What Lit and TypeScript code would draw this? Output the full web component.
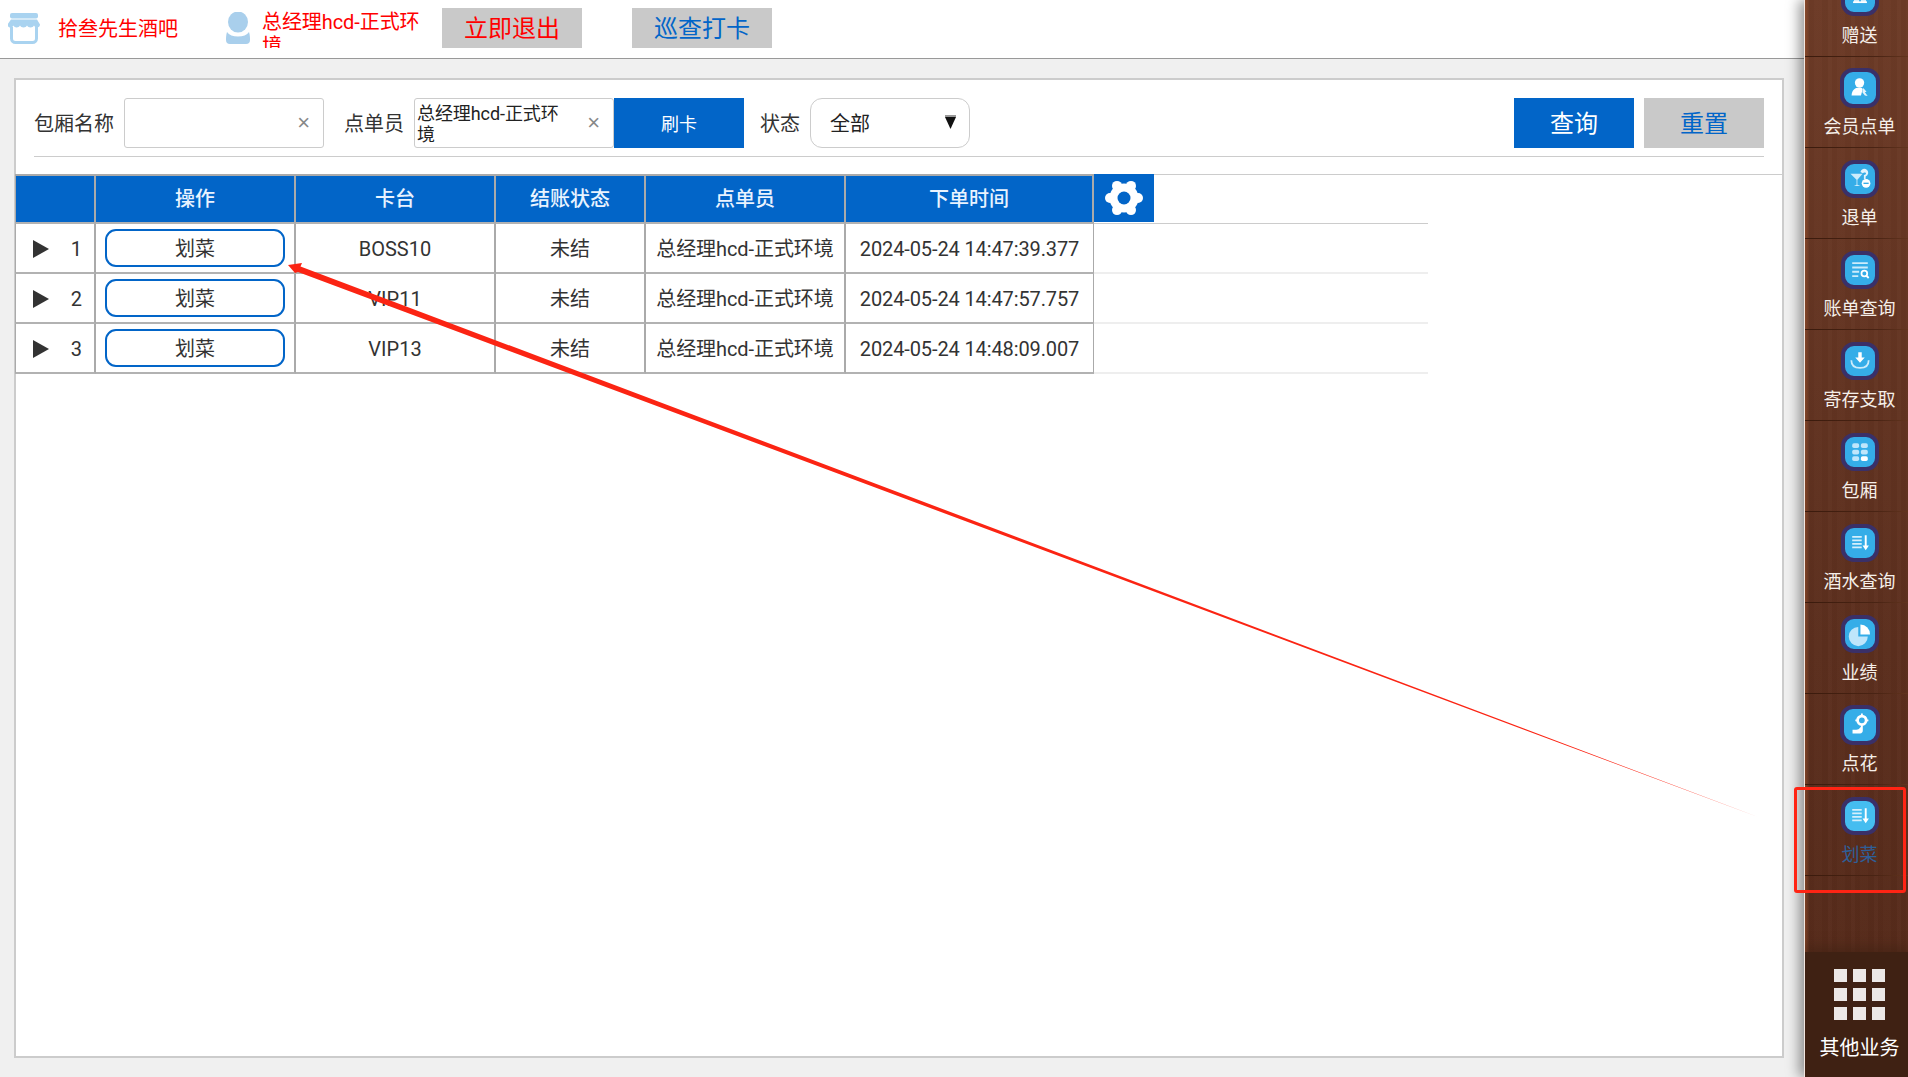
import { css, html, svg, LitElement } from "lit";
import { customElement } from "lit/decorators.js";

const columns = [81, 200, 200, 150, 200, 248];
const rows = [
  { no: 1, table: "BOSS10", status: "未结", waiter: "总经理hcd-正式环境", time: "2024-05-24 14:47:39.377" },
  { no: 2, table: "VIP11", status: "未结", waiter: "总经理hcd-正式环境", time: "2024-05-24 14:47:57.757" },
  { no: 3, table: "VIP13", status: "未结", waiter: "总经理hcd-正式环境", time: "2024-05-24 14:48:09.007" },
];

const listArrow = svg`
  <path d="M6 7h11v2H6zM6 11h11v2H6zM6 15h11v2H6zM6 19h11v2H6z" fill="#d5effc"/>
  <path d="M20.500 6h2.200v12h2.600l-3.700 5.500-3.700-5.500h2.600z" fill="#fff"/>`;

const menu = [
  {
    label: "赠送",
    icon: svg`<path d="M7 8h16v3H7zM8 12h14v10H8z" fill="#d5effc"/><path d="M14 8h2v14h-2z" fill="#35ade8"/><path d="M7 20h16v2H7z" fill="#fff"/>`,
  },
  {
    label: "会员点单",
    big: true,
    icon: svg`<circle cx="14.500" cy="9.500" r="5" fill="#fff"/><path d="M6 23c0-5 3.500-8.500 8-8.500 2 0 3 .5 4 1.500l-2 7z" fill="#fff"/><path d="M18.500 15l3.500 4-1.800.5 3 4-3-.5-2.700-3.500z" fill="#e3f4fd"/>`,
  },
  {
    label: "退单",
    icon: svg`<path d="M4 9h14l-6 7v5.500l3.500 1.500H8l3-1.500V16z" fill="#cdecfb"/><path d="M15.500 7a4.500 4.500 0 1 1 6 5V15h-2v-4.500c2-.3 2.800-1.500 2.200-2.500-.7-1-2.900-.6-3.300.5z" fill="#e3f4fd"/><circle cx="22" cy="20" r="5" fill="#fff"/><path d="M19 19.200h6v1.600h-6z" fill="#35ade8"/>`,
  },
  {
    label: "账单查询",
    icon: svg`<path d="M6 6h18v2.200H6zM6 11h18v2.200H6zM6 16h8v2.200H6zM6 21h7v2.200H6z" fill="#cdecfb"/><circle cx="20" cy="19" r="3.300" fill="none" stroke="#fff" stroke-width="2"/><path d="M22.300 21.500l2.700 2.700" stroke="#fff" stroke-width="2.200"/>`,
  },
  {
    label: "寄存支取",
    icon: svg`<path d="M13 5h4v6h3.500L15 17l-5.500-6H13z" fill="#fff"/><path d="M5 14c0 6 3.500 9 10 9s10-3 10-9" fill="none" stroke="#cdecfb" stroke-width="2"/>`,
  },
  {
    label: "包厢",
    icon: svg`<g fill="#bfe6fb"><rect x="6" y="5" width="8" height="5.500" rx="2"/><rect x="16" y="5" width="8" height="5.500" rx="2"/><rect x="6" y="12.500" width="8" height="5.500" rx="2"/><rect x="16" y="12.500" width="8" height="5.500" rx="2"/><rect x="6" y="20" width="8" height="5.500" rx="2"/></g><rect x="16" y="20" width="8" height="5.500" rx="2" fill="#fff"/>`,
  },
  { label: "酒水查询", icon: listArrow },
  {
    label: "业绩",
    icon: svg`<path d="M13 7v11h11A11 11 0 1 1 13 7z" fill="#bfe6fb"/><path d="M15.500 4A11 11 0 0 1 26.500 15.500h-11z" fill="#fff"/>`,
  },
  {
    label: "点花",
    big: true,
    icon: svg`<circle cx="17" cy="10" r="4.600" fill="none" stroke="#fff" stroke-width="3"/><path d="M17 2.800v2M17 15.200v2M10 10h2M22 10h2" stroke="#fff" stroke-width="2"/><path d="M16 17h2v4c0 2-1 3-3 3H7v-4h4c2 0 3-.5 3.500-1.500z" fill="#fff"/>`,
  },
  { label: "划菜", icon: listArrow, active: true },
];

@customElement("app-root")
export class AppRoot extends LitElement {
  static styles = css`
    :host {
      display: flex;
      position: relative;
      width: 1908px;
      height: 1077px;
      overflow: hidden;
      font-family: "Roboto", "Noto Sans CJK SC", sans-serif;
      font-size: 20px;
      color: #333;
      background: #f0f0f0;
    }

    .main {
      width: 1804px;
      display: flex;
      flex-direction: column;
      flex: none;
    }

    .header {
      height: 58px;
      box-sizing: content-box;
      border-bottom: 1px solid #999;
      background: #fff;
      display: flex;
      align-items: flex-start;
      padding-left: 8px;
      color: #f00;
      flex: none;
    }
    .shop-icon {
      margin-top: 13px;
      width: 32px;
      height: 31px;
    }
    .shop-name {
      margin-left: 18px;
      margin-top: 15px;
      width: 119px;
      line-height: 28px;
      white-space: nowrap;
    }
    .user-icon {
      margin-left: 49px;
      margin-top: 12px;
      width: 24px;
      height: 32px;
    }
    .user-name {
      margin-left: 12px;
      margin-top: 10px;
      width: 166px;
      height: 38px;
      line-height: 24px;
      overflow: hidden;
      letter-spacing: -0.08px;
    }
    .head-btn {
      margin-top: 8px;
      width: 140px;
      height: 40px;
      box-sizing: border-box;
      padding-bottom: 4px;
      background: #c9c9c9;
      font-size: 24px;
      display: flex;
      align-items: center;
      justify-content: center;
    }
    .quit {
      margin-left: 14px;
    }
    .patrol {
      margin-left: 50px;
      color: #0265c8;
    }

    .panel {
      margin: 19px 20px 19px 14px;
      flex: 1;
      border: 2px solid #ccc;
      background: #fff;
    }
    .filters {
      margin: 18px 18px 0;
      height: 59px;
      box-sizing: border-box;
      border-bottom: 1px solid #ccc;
      display: flex;
      align-items: flex-start;
      color: #333;
    }
    .label {
      height: 50px;
      line-height: 52px;
    }
    .field {
      width: 200px;
      height: 50px;
      box-sizing: border-box;
      border: 1px solid #ccc;
      border-radius: 3px;
      display: flex;
      align-items: center;
      justify-content: flex-end;
      padding-right: 13px;
      margin-left: 10px;
      color: #888;
    }
    .field-name {
      margin-right: 20px;
    }
    .field-text {
      flex: 1;
      font-size: 18px;
      line-height: 21px;
      color: #222;
      padding: 2px 24px 0 2px;
      letter-spacing: -0.08px;
    }
    .clear {
      font-size: 22px;
      font-family: "Liberation Sans", sans-serif;
      line-height: 1;
    }
    .swipe {
      width: 130px;
      height: 50px;
      background: #0265c8;
      color: #fff;
      font-size: 18px;
      display: flex;
      align-items: center;
      justify-content: center;
      margin-right: 16px;
    }
    .select {
      width: 160px;
      height: 50px;
      box-sizing: border-box;
      border: 1px solid #ccc;
      border-radius: 12px;
      margin-left: 10px;
      padding: 0 13px 2px 19px;
      display: flex;
      align-items: center;
      justify-content: space-between;
      color: #222;
    }
    .spacer {
      flex: 1;
    }
    .btn {
      width: 120px;
      height: 50px;
      box-sizing: border-box;
      padding-bottom: 4px;
      font-size: 24px;
      display: flex;
      align-items: center;
      justify-content: center;
    }
    .query {
      background: #0265c8;
      color: #fff;
      margin-right: 10px;
    }
    .reset {
      background: #c9c9c9;
      color: #0265c8;
    }

    .grid {
      margin-top: 17px;
      border-top: 1px solid #ccc;
    }
    .row {
      display: flex;
      width: 1413px;
      margin-left: -1px;
      height: 50px;
      box-sizing: border-box;
      border-bottom: 2px solid #eee;
    }
    .head {
      margin-top: -1px;
      border-bottom: 1px solid #ccc;
    }
    .cell {
      height: 50px;
      box-sizing: border-box;
      flex: none;
      padding-bottom: 2px;
      border-right: 2px solid #aaa;
      border-bottom: 2px solid #b2b2b2;
      display: flex;
      align-items: center;
      justify-content: center;
      white-space: nowrap;
    }
    .cell:first-child {
      border-left: 1px solid #aaa;
    }
    .cell:last-child {
      border-right-width: 1px;
    }
    .head .cell {
      background: #0265c8;
      border-top: 2px solid #aaa;
      color: #e9f3ff;
      font-weight: 500;
      padding-bottom: 4px;
    }
    .latin {
      padding: 1px 0 0;
    }
    .waiter {
      letter-spacing: -0.08px;
    }
    .time {
      padding: 1px 0 0;
      letter-spacing: -0.12px;
    }
    .no-cell {
      justify-content: space-between;
      padding: 1px 12px 0 17px;
    }
    .tri {
      width: 16px;
      height: 18px;
    }
    .pick-cell {
      padding-bottom: 0;
    }
    .pick {
      width: 180px;
      height: 38px;
      box-sizing: border-box;
      border: 2px solid #0265c8;
      border-radius: 11px;
      padding-bottom: 2px;
      display: flex;
      align-items: center;
      justify-content: center;
    }
    .head .gear {
      width: 60px;
      height: 48px;
      flex: none;
      background: #0265c8;
      display: flex;
      align-items: center;
      justify-content: center;
    }
    .gear svg {
      width: 40px;
      height: 36px;
    }

    .side {
      width: 104px;
      flex: none;
      display: flex;
      flex-direction: column;
      overflow: hidden;
      position: relative;
      box-sizing: border-box;
      border-left: 1px solid #f2e6e0;
      box-shadow: -5px 0 12px rgba(0, 0, 0, 0.4);
      background:
        repeating-linear-gradient(90deg, rgba(255, 255, 255, 0.015) 0 4px, rgba(0, 0, 0, 0.02) 4px 9px, rgba(255, 255, 255, 0.008) 9px 17px, rgba(0, 0, 0, 0.025) 17px 23px),
        linear-gradient(90deg, rgba(160, 80, 40, 0.5) 0, rgba(160, 80, 40, 0) 4px),
        linear-gradient(180deg, #6d3b27 0, #5c2f1e 60%, #552a1a 100%);
    }
    .items {
      margin-top: -34px;
      flex: 1;
    }
    .item {
      height: 91px;
      box-sizing: border-box;
      padding: 12px 0 0 6px;
      border-bottom: 1px solid;
      border-image: linear-gradient(90deg, #3a1a0c, #4a2414 70%, #63351f) 1;
      display: flex;
      flex-direction: column;
      align-items: center;
      color: #f5efe9;
      font-size: 18px;
    }
    .item.big {
      padding-top: 11px;
    }
    .item.big .tile {
      width: 40px;
      height: 40px;
      margin-bottom: 4px;
    }
    .tile {
      width: 38px;
      height: 38px;
      margin-bottom: 5px;
      box-sizing: border-box;
      border: 4px solid #3a3068;
      border-radius: 13px;
      background: #35ade8;
      flex: none;
    }
    .tile svg {
      display: block;
      box-sizing: border-box;
      padding: 2px;
      width: 100%;
      height: 100%;
    }
    .item.active {
      color: #2f5f98;
    }
    .item.active .tile {
      background: #45bdf0;
    }
    .more {
      height: 125px;
      flex: none;
      box-sizing: border-box;
      background: #3f2113;
      box-shadow: 0 -6px 10px rgba(63, 33, 19, 0.55);
      padding: 17px 0 0 6px;
      display: flex;
      flex-direction: column;
      align-items: center;
      color: #fff;
      position: relative;
    }
    .dots {
      display: grid;
      grid-template-columns: repeat(3, 13px);
      grid-auto-rows: 13px;
      gap: 6px;
      margin-bottom: 12px;
    }
    .dots span {
      background: #ece8e6;
    }

    .mark {
      position: absolute;
      left: 0;
      top: 0;
      width: 1908px;
      height: 1077px;
      pointer-events: none;
    }
    .frame {
      position: absolute;
      left: 1794px;
      top: 787px;
      width: 112px;
      height: 106px;
      box-sizing: border-box;
      border: 3px solid #ff2414;
      border-radius: 3px;
      pointer-events: none;
    }
  `;

  private renderHeader() {
    return html`
      <div class="header">
        <svg class="shop-icon" viewBox="0 0 32 31">
          <rect x="2" y="0" width="28" height="5.500" rx="2" fill="#a9d3f0"/>
          <path d="M3 6.500h26l3 5c0 2-1.500 3-3 3-1.200 0-2.500-.8-3-2-.5 1.200-2 2-3.500 2s-3-.8-3.500-2c-.5 1.200-2 2-3.500 2s-3-.8-3.500-2c-.5 1.200-2 2-3.500 2-1.200 0-2.500-.8-3-2-.5 1.200-1.800 2-3 2-1.500 0-3-1-3-3z" fill="#a9d3f0"/>
          <path d="M3.500 14v11.500a4 4 0 0 0 4 4h17a4 4 0 0 0 4-4V14" fill="none" stroke="#a9d3f0" stroke-width="3"/>
        </svg>
        <div class="shop-name">拾叁先生酒吧</div>
        <svg class="user-icon" viewBox="0 0 24 32">
          <ellipse cx="12" cy="10" rx="10" ry="10.500" fill="#a9cfec"/>
          <path d="M1 20c2 3 6 4.500 11 4.500S21 23 23 20c1 3 1 6 1 8a4 4 0 0 1-4 4H4a4 4 0 0 1-4-4c0-2 0-5 1-8z" fill="#a9cfec"/>
        </svg>
        <div class="user-name">总经理hcd-正式环境</div>
        <div class="head-btn quit">立即退出</div>
        <div class="head-btn patrol">巡查打卡</div>
      </div>
    `;
  }

  private renderFilters() {
    return html`
      <div class="filters">
        <div class="label">包厢名称</div>
        <div class="field field-name"><span class="clear">×</span></div>
        <div class="label">点单员</div>
        <div class="field">
          <div class="field-text">总经理hcd-正式环境</div>
          <span class="clear">×</span>
        </div>
        <div class="swipe">刷卡</div>
        <div class="label">状态</div>
        <div class="select">
          <span>全部</span>
          <svg width="11" height="14" viewBox="0 0 11 14">
            <path d="M0 0h11v2H0z" fill="#999"/>
            <path d="M0 2h11L5.500 14z" fill="#111"/>
          </svg>
        </div>
        <div class="spacer"></div>
        <div class="btn query">查询</div>
        <div class="btn reset">重置</div>
      </div>
    `;
  }

  private renderGrid() {
    const titles = ["", "操作", "卡台", "结账状态", "点单员", "下单时间"];
    const w = (i: number) => `width:${columns[i]}px`;
    return html`
      <div class="grid">
        <div class="row head">
          ${titles.map((t, i) => html`<div class="cell" style=${w(i)}>${t}</div>`)}
          <div class="gear">
            <svg viewBox="0 0 40 36">
              <g fill="#fff">
                <circle cx="20" cy="18" r="14.500"/>
                ${[0, 60, 120, 180, 240, 300].map((a) => {
                  const r = (a * Math.PI) / 180;
                  return svg`<circle cx=${20 + 14 * Math.cos(r)} cy=${18 + 14 * Math.sin(r)} r="5"/>`;
                })}
              </g>
              <circle cx="20" cy="18" r="6.500" fill="#0265c8"/>
            </svg>
          </div>
        </div>
        ${rows.map(
          (r) => html`
            <div class="row">
              <div class="cell no-cell" style=${w(0)}>
                <svg class="tri" viewBox="0 0 16 18"><path d="M0 0l16 9-16 9z" fill="#333"/></svg>
                <span>${r.no}</span>
              </div>
              <div class="cell pick-cell" style=${w(1)}><div class="pick">划菜</div></div>
              <div class="cell latin" style=${w(2)}>${r.table}</div>
              <div class="cell" style=${w(3)}>${r.status}</div>
              <div class="cell waiter" style=${w(4)}>${r.waiter}</div>
              <div class="cell time" style=${w(5)}>${r.time}</div>
            </div>
          `,
        )}
      </div>
    `;
  }

  private renderSide() {
    return html`
      <div class="side">
        <div class="items">
          ${menu.map(
            (m) => html`
              <div class="item ${m.big ? "big" : ""} ${m.active ? "active" : ""}">
                <div class="tile"><svg viewBox="0 0 30 30">${m.icon}</svg></div>
                <div>${m.label}</div>
              </div>
            `,
          )}
        </div>
        <div class="more">
          <div class="dots">${Array.from({ length: 9 }, () => html`<span></span>`)}</div>
          <div>其他业务</div>
        </div>
      </div>
    `;
  }

  render() {
    return html`
      <div class="main">
        ${this.renderHeader()}
        <div class="panel">${this.renderFilters()} ${this.renderGrid()}</div>
      </div>
      ${this.renderSide()}
      <svg class="mark" viewBox="0 0 1908 1077">
        <polygon points="288,265 302,263 300.500,266.500 1758,817 298,272 295,273" fill="#fb2413"/>
      </svg>
      <div class="frame"></div>
    `;
  }
}
